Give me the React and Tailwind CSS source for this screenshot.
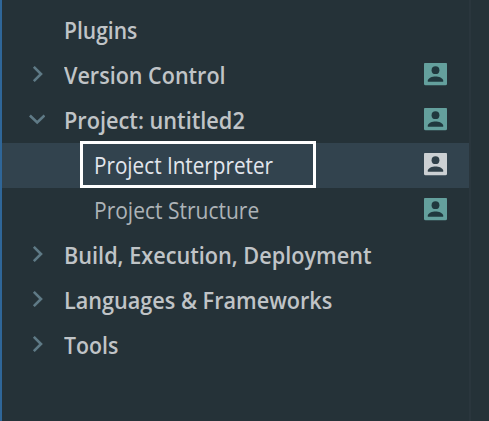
const rows = [
  { label: "Plugins", fit: "scale-x-[0.915]" },
  { label: "Version Control", arrow: "right", badge: true, fit: "scale-x-[0.937]" },
  { label: "Project: untitled2", arrow: "down", badge: true, fit: "scale-x-[0.944]" },
  { label: "Project Interpreter", child: true, selected: true, badge: true, fit: "scale-x-[0.9]" },
  { label: "Project Structure", child: true, badge: true, fit: "scale-x-[0.913]" },
  { label: "Build, Execution, Deployment", arrow: "right", fit: "scale-x-[0.942]" },
  { label: "Languages & Frameworks", arrow: "right", fit: "scale-x-[0.941]" },
  { label: "Tools", arrow: "right", fit: "scale-x-[0.925]" },
];

function Arrow({ direction }) {
  return (
    <svg className="h-4 w-4" viewBox="0 0 16 16" fill="none" stroke="#5f7a86" strokeWidth="2.6">
      <path d={direction === "down" ? "M0.9 4.5 L8.2 11.5 L15.5 4.5" : "M4.8 0.9 L12 8 L4.8 15.1"} />
    </svg>
  );
}

function Badge({ selected }) {
  return (
    <svg className="h-[23px] w-[23px]" viewBox="0 0 23 23">
      <rect y="-0.3" width="23" height="22.6" rx="1.6" fill={selected ? "#ccd0d3" : "#64a09d"} />
      <g fill={selected ? "#304049" : "#20383e"}>
        <circle cx="11.5" cy="7.2" r="3.9" />
        <path d="M3.8 18.8v-1.2c0-2.7 4.6-4.2 7.7-4.2s7.7 1.5 7.7 4.2v1.2z" />
      </g>
    </svg>
  );
}

function Row({ label, arrow, badge, child, selected, fit }) {
  return (
    <li className={`relative flex h-[45px] items-center ${selected ? "bg-[#32434e]" : ""}`}>
      <span className="flex w-[62px] shrink-0 pb-[3px] pl-[27px]">{arrow && <Arrow direction={arrow} />}</span>
      <span
        className={`origin-left whitespace-nowrap pb-px text-[23px] leading-[44px] ${fit} ${
          child ? "ml-[30px] font-normal" : "font-semibold"
        } ${selected ? "text-[#e2e6ed]" : child ? "text-[#adb3b7]" : "text-[#c0c4c7]"}`}
      >
        {label}
      </span>
      {badge && (
        <span className="ml-auto mr-[22px] pb-[3px]">
          <Badge selected={selected} />
        </span>
      )}
      {selected && <span className="absolute -top-[2px] left-[78px] h-[47px] w-[236px] border-3 border-white" />}
    </li>
  );
}

export default function App() {
  return (
    <main className="flex h-[421px] w-[489px] overflow-hidden bg-[#253238] font-['Open_Sans','Noto_Sans',sans-serif]">
      <div className="w-[2px] shrink-0 bg-[#2f6698]" />
      <ul className="w-[467px] shrink-0 pt-[8px]">
        {rows.map((row) => (
          <Row key={row.label} {...row} />
        ))}
      </ul>
      <div className="w-[2px] bg-[#2a363d]" />
    </main>
  );
}
